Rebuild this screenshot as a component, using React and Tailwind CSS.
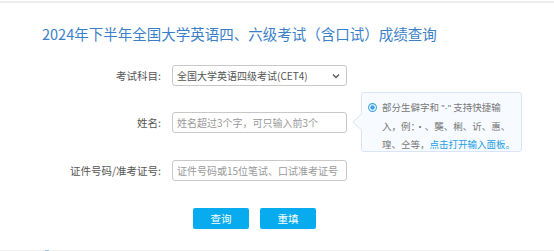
import React from "react";

function Chevron() {
  return (
    <svg width="8" height="6" viewBox="0 0 8 6" className="shrink-0">
      <polyline points="1,1.5 4,4.5 7,1.5" fill="none" stroke="#555" strokeWidth="1.3" />
    </svg>
  );
}

export default function App() {
  const font = { fontFamily: '"Noto Sans CJK SC", "Noto Sans", sans-serif' };
  return (
    <div className="relative w-[554px] h-[251px] overflow-hidden bg-white" style={font}>
      <div className="h-px bg-white" />
      <div className="h-[2px] bg-[#ececec]" />

      <div className="mt-[21px] pl-[42px] text-[14.5px] leading-[20px] text-[#3b7fc8] whitespace-nowrap">
        2024年下半年全国大学英语四、六级考试（含口试）成绩查询
      </div>

      {/* Row 1 */}
      <div className="mt-[21px] flex items-center h-[21px]">
        <div className="w-[161px] text-right text-[10.5px] text-[#555] whitespace-nowrap">考试科目:</div>
        <div className="ml-[11px] w-[175px] h-[21px] border border-[#c8c8c8] rounded-[3px] flex items-center justify-between pl-[4px] pr-[6px]">
          <span className="text-[10px] text-[#555] whitespace-nowrap">全国大学英语四级考试(CET4)</span>
          <Chevron />
        </div>
      </div>

      {/* Row 2 */}
      <div className="mt-[26px] flex items-center h-[21px]">
        <div className="w-[161px] text-right text-[10.5px] text-[#555] whitespace-nowrap">姓名:</div>
        <div className="ml-[11px] w-[175px] h-[21px] border border-[#c8c8c8] rounded-[3px] flex items-center pl-[4px]">
          <span className="text-[10px] text-[#999] whitespace-nowrap">姓名超过3个字，可只输入前3个</span>
        </div>
      </div>

      {/* Row 3 */}
      <div className="mt-[27px] flex items-center h-[21px]">
        <div className="w-[161px] text-right text-[10.5px] text-[#555] whitespace-nowrap">证件号码/准考证号:</div>
        <div className="ml-[11px] w-[175px] h-[21px] border border-[#c8c8c8] rounded-[3px] flex items-center pl-[4px]">
          <span className="text-[10px] text-[#999] whitespace-nowrap">证件号码或15位笔试、口试准考证号</span>
        </div>
      </div>

      {/* Buttons */}
      <div className="mt-[27px] flex pl-[193px] gap-[11px]">
        <button className="w-[56px] h-[21px] bg-[#08acee] rounded-[2px] text-white text-[10.5px] flex items-center justify-center">查询</button>
        <button className="w-[56px] h-[21px] bg-[#08acee] rounded-[2px] text-white text-[10.5px] flex items-center justify-center">重填</button>
      </div>

      {/* bottom line */}
      <div className="absolute left-0 right-0 top-[250px] h-px bg-[#f0f0f0]">
        <div className="ml-[45px] w-[4px] h-px bg-[#9cc8ec]" />
      </div>

      {/* Tooltip */}
      <div className="absolute left-[361px] top-[92px] w-[161px] h-[60px] bg-[#f7fbff] border border-[#d7e5f6] rounded-[3px]">
        <svg width="10" height="18" viewBox="0 0 10 18" className="absolute left-[-10px] top-[20px]">
          <polygon points="10,0 1,9 10,18" fill="#f7fbff" />
          <polyline points="10,0.5 1,9 10,17.5" fill="none" stroke="#d7e5f6" strokeWidth="1" />
        </svg>
        <div className="flex pl-[6px] pt-[5px]">
          <div className="h-[18px] flex items-center shrink-0">
            <svg width="9" height="9" viewBox="0 0 9 9">
              <circle cx="4.5" cy="4.5" r="3.9" fill="#fff" stroke="#3aa2e3" strokeWidth="1.1" />
              <circle cx="4.5" cy="4.5" r="2.2" fill="#3aa2e3" />
            </svg>
          </div>
          <div className="ml-[5px] text-[9.5px] leading-[18px] text-[#777] whitespace-nowrap">
            部分生僻字和 <span style={{ fontFamily: '"Liberation Sans", sans-serif' }}>"·"</span> 支持快捷输<br />
            入，例：·、龑、梸、䜣、惠、<br />
            瑝、仝等，<span className="text-[#1e9fe6]">点击打开输入面板。</span>
          </div>
        </div>
      </div>
    </div>
  );
}
